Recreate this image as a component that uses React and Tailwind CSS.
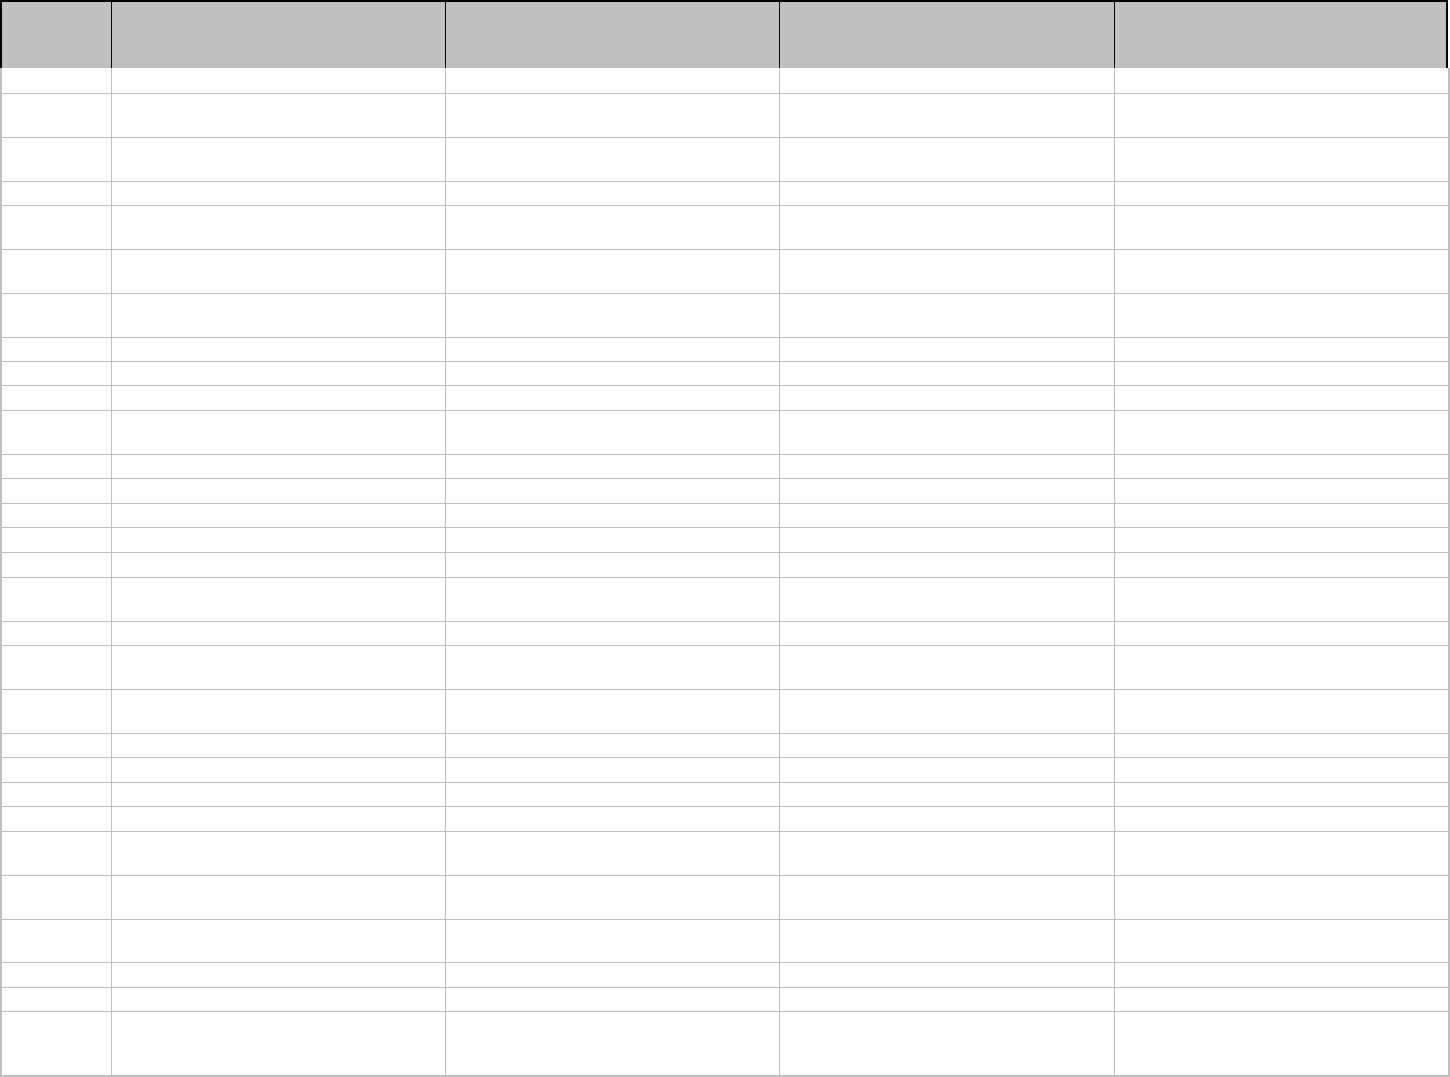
import React from 'react';

// row heights follow the sheet: single lines, wrapped lines, and one tall last row
const rowHeights = [
  'h-[26px]', 'h-[44px]', 'h-[44px]', 'h-[24px]', 'h-[44px]', 'h-[44px]', 'h-[44px]', 'h-[24px]',
  'h-[24px]', 'h-[25px]', 'h-[44px]', 'h-[24px]', 'h-[25px]', 'h-[24px]', 'h-[25px]', 'h-[25px]',
  'h-[44px]', 'h-[24px]', 'h-[44px]', 'h-[44px]', 'h-[24px]', 'h-[25px]', 'h-[24px]', 'h-[25px]',
  'h-[44px]', 'h-[44px]', 'h-[43px]', 'h-[25px]', 'h-[24px]', 'h-[65px]',
];

const cols = 'grid grid-cols-[109px_334px_334px_335px_1fr]';

function HeaderRow() {
  return (
    <div className={`${cols} h-[68px] w-[1448px] border-t-2 border-l-2 border-r-2 border-black bg-[#c0c0c0]`}>
      <div />
      <div className="border-l border-black" />
      <div className="border-l border-black" />
      <div className="border-l border-black" />
      <div className="border-l border-black" />
    </div>
  );
}

function BodyRow({ height, last }) {
  return (
    <div className={`${cols} ${height} ${last ? 'border-b-2' : 'border-b'} border-[#c0c0c0] bg-white`}>
      <div />
      <div className="border-l border-[#c0c0c0]" />
      <div className="border-l border-[#c0c0c0]" />
      <div className="border-l border-[#c0c0c0]" />
      <div className="border-l border-[#c0c0c0]" />
    </div>
  );
}

export default function App() {
  return (
    <div className="w-[1450px] min-h-[1077px] bg-white font-['Liberation_Sans',Arial,sans-serif]">
      <HeaderRow />
      <div className="w-[1450px] border-l-2 border-r-2 border-[#c0c0c0]">
        {rowHeights.map((h, i) => (
          <BodyRow key={i} height={h} last={i === rowHeights.length - 1} />
        ))}
      </div>
    </div>
  );
}
